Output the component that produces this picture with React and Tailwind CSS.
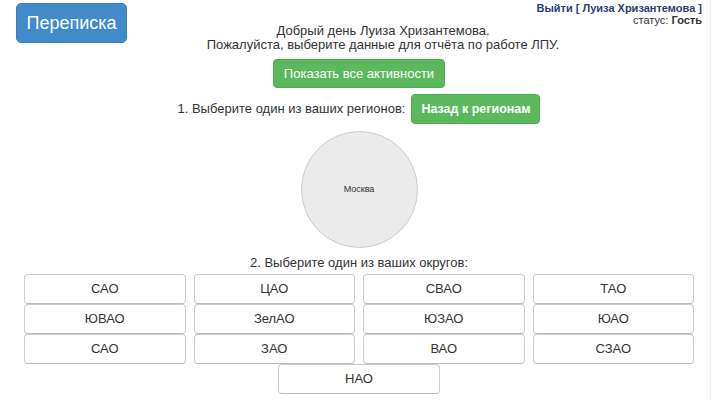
import React from "react";

const okruga = [
 "САО", "ЦАО", "СВАО", "ТАО",
 "ЮВАО", "ЗелАО", "ЮЗАО", "ЮАО",
 "САО", "ЗАО", "ВАО", "СЗАО",
];

function OkrugButton({ name, className = "" }) {
 return (
  <button
   className={
    "h-[30px] bg-white border border-[#ccc] border-b-[#bbb] rounded-[4px] text-[13px] text-[#333] " +
    className
   }
  >
   {name}
  </button>
 );
}

export default function App() {
 return (
  <div className="w-[720px] h-[400px] bg-white overflow-hidden font-['Liberation_Sans',Arial,sans-serif] text-[#333]">
   <div className="relative w-[711px] h-[400px] border-r border-[#f0f0f0]">
    {/* user info in the corner */}
    <div className="absolute right-[8px] top-[2px] text-right text-[11px] leading-[12px]">
     <div className="font-bold text-[#2b3e70]">Выйти [ Луиза Хризантемова ]</div>
     <div>
      статус: <span className="font-bold">Гость</span>
     </div>
    </div>

    <div className="flex items-start h-[52px]">
     <button className="ml-[16px] mt-[3px] w-[111px] h-[40px] bg-[#428bca] border border-[#3b7fc0] rounded-[5px] text-white text-[18px]">
      Переписка
     </button>
     <div className="flex-1 pt-[24px] pr-[71px] text-center text-[13px] leading-[14px]">
      <p>Добрый день Луиза Хризантемова.</p>
      <p>Пожалуйста, выберите данные для отчёта по работе ЛПУ.</p>
     </div>
    </div>

    <div className="pl-[24px] pr-[16px] flex flex-col items-center">
     <button className="mt-[7px] h-[29px] w-[172px] bg-[#5cb85c] border border-[#4cae4c] rounded-[4px] text-white text-[13px]">
      Показать все активности
     </button>

     <div className="mt-[6px] flex items-center gap-[6px] text-[13px]">
      <span>1. Выберите один из ваших регионов:</span>
      <button className="h-[30px] w-[129px] bg-[#5cb85c] border border-[#4cae4c] rounded-[4px] text-white text-[12.5px] font-bold">
       Назад к регионам
      </button>
     </div>

     <div className="mt-[7px] w-[117px] h-[117px] rounded-full bg-[#ebebeb] border border-[#ccc] flex items-center justify-center text-[9px] text-[#333]">
      Москва
     </div>

     <p className="mt-[8px] text-[13px] leading-[14px]">2. Выберите один из ваших округов:</p>

     <div className="mt-[4px] w-full grid grid-cols-4 gap-x-[8px] gap-y-0">
      {okruga.map((o, i) => (
       <OkrugButton key={i} name={o} />
      ))}
     </div>
     <OkrugButton name="НАО" className="w-[162px]" />
    </div>
   </div>
  </div>
 );
}
